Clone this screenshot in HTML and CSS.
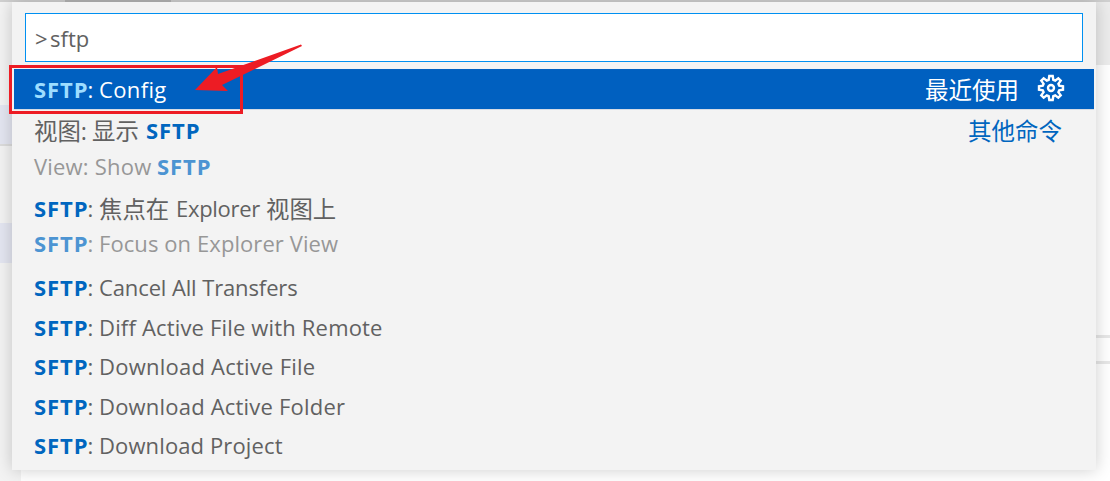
FILE: index.html
```html
<!DOCTYPE html>
<html lang="zh-CN">
<head>
<meta charset="utf-8">
<title>Command Palette</title>
<link rel="stylesheet" href="styles.css">
</head>
<body>
<div class="editor">
  <div class="topline"><span class="topline-tab"></span></div>
  <div class="workbench">
    <div class="sidebar">
      <span class="side-item first"></span>
      <span class="side-item second"></span>
    </div>
    <div class="content">
      <div class="tabs"></div>
      <div class="divider upper"></div>
      <div class="divider lower"></div>
    </div>
  </div>
</div>
<div class="palette">
  <div class="input"><span class="prompt">&gt;</span><span class="query">sftp</span></div>
  <div class="list">
    <div class="row selected">
      <div class="line"><b>SFTP</b><span class="colon">:</span><span class="t-config">Config</span></div>
      <div class="group">最近使用
        <svg class="gear" viewBox="0 0 28 28"><path d="M11.7 5.8 12.3 2h3.4l.6 3.8 1.9.8 3.1-2.3 2.4 2.4-2.3 3.1.8 1.9 3.8.6v3.4l-3.8.6-.8 1.9 2.3 3.1-2.4 2.4-3.1-2.3-1.9.8-.6 3.8h-3.4l-.6-3.8-1.9-.8-3.1 2.3-2.4-2.4 2.3-3.1-.8-1.9-3.8-.6v-3.4l3.8-.6.8-1.9-2.3-3.1 2.4-2.4 3.1 2.3z"/><circle cx="14" cy="14" r="3"/></svg>
      </div>
    </div>
    <div class="row double">
      <div class="lines">
        <div class="line"><span class="cjk view">视图:</span><span class="cjk show">显示</span><b>SFTP</b></div>
        <div class="line detail"><span class="t-view">View: Show</span><b>SFTP</b></div>
      </div>
      <div class="group other">其他命令</div>
    </div>
    <div class="row double">
      <div class="lines">
        <div class="line"><b>SFTP</b><span class="colon">:</span><span class="cjk focus">焦点在</span><span class="t-explorer">Explorer</span><span class="cjk">视图上</span></div>
        <div class="line detail"><b>SFTP</b><span class="colon">:</span><span class="t-focus">Focus on Explorer View</span></div>
      </div>
    </div>
    <div class="row"><div class="line"><b>SFTP</b><span class="colon">:</span><span class="t-cancel">Cancel All Transfers</span></div></div>
    <div class="row"><div class="line"><b>SFTP</b><span class="colon">:</span><span class="t-diff">Diff Active File with Remote</span></div></div>
    <div class="row"><div class="line"><b>SFTP</b><span class="colon">:</span><span class="t-file">Download Active File</span></div></div>
    <div class="row"><div class="line"><b>SFTP</b><span class="colon">:</span><span class="t-folder">Download Active Folder</span></div></div>
    <div class="row"><div class="line"><b>SFTP</b><span class="colon">:</span><span class="t-project">Download Project</span></div></div>
  </div>
</div>
<div class="callout"></div>
<svg class="arrow" viewBox="0 0 110 50"><path d="M3 46 25 23l1 7L109 0.5 110 2 30 41l6 6z"/></svg>
</body>
</html>
```
FILE: styles.css
```css
* { box-sizing: border-box; }
body {
  margin: 0;
  width: 1110px;
  height: 481px;
  overflow: hidden;
  position: relative;
  background: #fff;
  color: #616161;
  font: 22px/36px "Open Sans", "Noto Sans CJK SC", sans-serif;
}
.editor { height: 481px; display: flex; flex-direction: column; }
.topline { height: 2px; background: #d0d0d0; padding-left: 65px; display: flex; }
.topline-tab { width: 106px; background: #b5b5b5; }
.workbench { flex: 1; display: flex; }
.sidebar { width: 21px; background: #f3f3f3; }
.side-item { display: block; background: #e4e6f1; height: 40px; }
.side-item.first { margin-top: 103px; border-bottom: 2px solid #dcdcdc; height: 41px; }
.side-item.second { margin-top: 77px; }
.content { flex: 1; }
.tabs { height: 63px; background: #ececec; }
.divider { height: 3px; background: #e7e7e7; }
.divider.upper { margin-top: 270px; }
.divider.lower { margin-top: 23px; }

.palette {
  position: absolute;
  left: 12px;
  top: 2px;
  width: 1084px;
  height: 468px;
  padding: 11px 2px 0;
  background: #f3f3f3;
  box-shadow: 0 0 16px rgba(0, 0, 0, .2);
}
.input {
  width: 1058px;
  height: 49px;
  margin: 0 11px 7px;
  padding: 1px 0 0 9px;
  border: 1px solid #0090f1;
  background: #fff;
  display: flex;
  align-items: center;
}
.prompt { width: 15px; }
.row { height: 39.5px; padding: 0 28px 0 20px; display: flex; justify-content: space-between; align-items: center; }
.row.selected { height: 40px; margin-bottom: 1px; background: #0060c0; color: #fff; box-shadow: 0 1px #d5dbe5; }
.row.double { height: 79px; align-items: flex-start; padding-top: 2px; }
.row.double + .row.double { height: 78.5px; padding-top: 1px; }
.line { display: flex; align-items: center; height: 36px; white-space: nowrap; }
.row.double + .row.double .detail { height: 34px; }
.line b { width: 54px; color: #0066bf; font-weight: 700; letter-spacing: .9px; }
.selected .line b { color: #9dddff; }
.colon { width: 11px; margin-left: -.5px; margin-right: .5px; }
.line.detail { color: #979797; }
.line.detail b { color: #4c94d2; }
.cjk { font-size: 23.4px; padding-top: 2px; }
.view { width: 58px; }
.show { width: 54px; }
.focus { width: 77px; }
.group { display: flex; align-items: center; font-size: 23.5px; padding-top: 2px; }
.other { color: #0066bf; padding: 1px 4px 0 0; }
.gear { width: 28px; height: 28px; margin: -5px 1px 0 18px; fill: none; stroke: #fff; stroke-width: 2.4; }
.t-view { width: 123px; letter-spacing: .2px; }
.t-explorer { width: 90px; letter-spacing: -.3px; }
.t-config { letter-spacing: .35px; }
.t-focus { letter-spacing: .08px; }
.t-cancel { letter-spacing: -.12px; }
.t-diff { letter-spacing: .17px; }
.t-file { letter-spacing: .24px; }
.t-folder { letter-spacing: .2px; }
.t-project { letter-spacing: .12px; }

.callout { position: absolute; left: 9px; top: 65px; width: 234px; height: 49px; border: 3px solid #ed1c24; }
.arrow { position: absolute; left: 192px; top: 44px; width: 110px; height: 50px; fill: #ed1c24; }
```
